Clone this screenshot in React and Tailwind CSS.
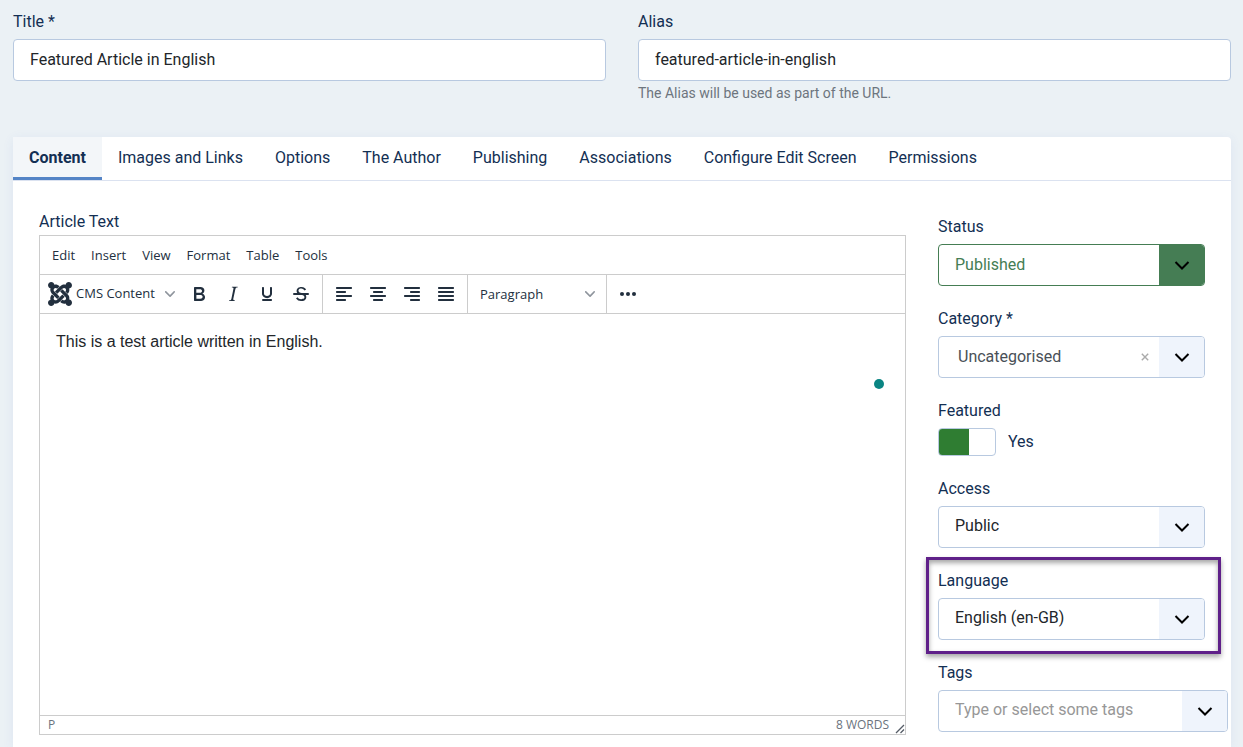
import React, { useState } from "react";
import clsx from "clsx";
import { SiJoomla } from "react-icons/si";

const TABS = [
  "Content",
  "Images and Links",
  "Options",
  "The Author",
  "Publishing",
  "Associations",
  "Configure Edit Screen",
  "Permissions",
];

const MENUS = ["Edit", "Insert", "View", "Format", "Table", "Tools"];

const SmallChevron = () => (
  <svg width="10" height="10" viewBox="0 0 10 10" className="fill-[#8f959d]">
    <path d="M8.7 2.2c.3-.3.8-.3 1 0 .4.4.4.9 0 1.2L5.7 7.8c-.3.3-.9.3-1.2 0L.2 3.4a.8.8 0 0 1 0-1.2c.3-.3.8-.3 1.1 0L5 6l3.7-3.8Z" />
  </svg>
);

const BigChevron = () => (
  <svg width="16" height="16" viewBox="0 0 16 16" fill="none" stroke="#000" strokeWidth="2">
    <path d="M1.5 5 8 11.5 14.5 5" />
  </svg>
);

const ToolButton = ({ label, children }) => (
  <button type="button" aria-label={label} className="flex h-[34px] w-[34px] items-center justify-center">
    <svg width="24" height="24" viewBox="0 0 24 24" className="fill-[#222f3e]">
      {children}
    </svg>
  </button>
);

// x and width of the four text lines in an alignment icon
const ALIGNMENTS = {
  "Align left": [[4, 16], [4, 10], [4, 16], [4, 10]],
  "Align center": [[4, 16], [7, 10], [4, 16], [7, 10]],
  "Align right": [[4, 16], [10, 10], [4, 16], [10, 10]],
  Justify: [[4, 16], [4, 16], [4, 16], [4, 16]],
};

const Field = ({ id, label, className, children }) => (
  <div className={clsx("relative flex flex-col gap-1", className)}>
    <label htmlFor={id} className="self-start leading-[26px]">
      {label}
    </label>
    {children}
  </div>
);

const SelectBox = ({ id, value, green, clearable }) => (
  <div
    className={clsx(
      "grid h-[42px] grid-cols-[1fr_28px_45px] overflow-hidden rounded border bg-white",
      green ? "border-[#457d54]" : "border-[#b8c9e0]"
    )}
  >
    <select
      id={id}
      className={clsx(
        "col-span-full row-start-1 appearance-none outline-none",
        green && "text-[#457d54]",
        clearable ? "pl-[19px] text-[#495057]" : "pl-4",
        !green && !clearable && "pb-0.5 text-[#22262a]"
      )}
    >
      <option>{value}</option>
    </select>
    {clearable && (
      <button
        type="button"
        aria-label={`Clear ${value}`}
        className="col-start-2 row-start-1 flex items-center justify-center"
      >
        <svg width="8" height="8" viewBox="0 0 8 8" stroke="#aaa" strokeWidth="1.4">
          <path d="m.8.8 6.4 6.4M7.2.8.8 7.2" />
        </svg>
      </button>
    )}
    <span
      className={clsx(
        "pointer-events-none col-start-3 row-start-1 flex items-center justify-center",
        green ? "bg-[#457d54]" : "bg-[#eff4fc]"
      )}
    >
      <BigChevron />
    </span>
  </div>
);

const Editor = () => {
  const [text, setText] = useState("This is a test article written in English.");
  const words = text.split(/\s+/).filter(Boolean).length;

  return (
    <div className="relative flex flex-1 flex-col border border-[#ccc] font-['Open_Sans',sans-serif] text-[13px] text-[#222f3e]">
      <div className="flex h-[39px] items-center gap-4 border-b border-[#ccc] px-3 pt-0.5">
        {MENUS.map((menu) => (
          <button type="button" key={menu}>
            {menu}
          </button>
        ))}
      </div>

      <div className="flex h-[39px] border-b border-[#ccc]">
        <div className="flex items-center border-r border-[#ccc] px-1">
          <button type="button" className="flex w-[138px] items-center pl-1">
            <SiJoomla size={24} />
            <span className="ml-1 flex-1 text-left">CMS Content</span>
            <span className="mr-[7px]">
              <SmallChevron />
            </span>
          </button>
          <ToolButton label="Bold">
            <path
              fillRule="evenodd"
              d="M7.8 19c-.3 0-.5 0-.6-.2l-.2-.5V5.7c0-.2 0-.4.2-.5l.6-.2h5c1.5 0 2.7.3 3.5 1 .7.6 1.1 1.4 1.1 2.5a3 3 0 0 1-.6 1.9c-.4.6-1 1-1.6 1.2.4.1.9.3 1.3.6s.8.7 1 1.2c.4.4.5 1 .5 1.6 0 1.3-.4 2.3-1.3 3-.8.7-2.1 1-3.8 1H7.8Zm5-8.3c.6 0 1.2-.1 1.6-.5.4-.3.6-.7.6-1.3 0-1.1-.8-1.7-2.3-1.7H9.3v3.5h3.4Zm.5 6c.7 0 1.3-.1 1.7-.4.4-.4.6-.9.6-1.5s-.2-1-.7-1.4c-.4-.3-1-.4-2-.4H9.4v3.8h4Z"
            />
          </ToolButton>
          <ToolButton label="Italic">
            <path d="m16.7 4.7-.1.9h-.3c-.6 0-1 0-1.4.3-.3.3-.4.6-.5 1.1l-2.1 9.8v.6c0 .5.4.8 1.4.8h.2l-.2.8H8l.2-.8h.2c1.1 0 1.8-.5 2-1.5l2-9.8.1-.5c0-.6-.4-.8-1.4-.8h-.3l.2-.9h5.8Z" />
          </ToolButton>
          <ToolButton label="Underline">
            <path d="M16 5c.6 0 1 .4 1 1v5.5a4 4 0 0 1-.4 1.8l-1 1.4a5.3 5.3 0 0 1-5.5 1 5 5 0 0 1-1.6-1c-.5-.4-.8-.9-1.1-1.4a4 4 0 0 1-.4-1.8V6c0-.6.4-1 1-1s1 .4 1 1v5.5c0 .3 0 .6.2 1l.6.7a3.3 3.3 0 0 0 2.2.8 3.4 3.4 0 0 0 2.2-.8c.3-.2.4-.5.6-.8l.2-.9V6c0-.6.4-1 1-1ZM8 17h8c.6 0 1 .4 1 1s-.4 1-1 1H8a1 1 0 0 1 0-2Z" />
          </ToolButton>
          <ToolButton label="Strikethrough">
            <path d="M15.6 8.5c-.5-.7-1-1.1-1.3-1.3-.6-.4-1.3-.6-2-.6-2.7 0-2.8 1.7-2.8 2.1 0 1.6 1.8 2 3.2 2.3 4.4.9 4.6 2.8 4.6 3.9 0 1.4-.7 4.1-5 4.1A6.2 6.2 0 0 1 7 16.4l1.5-1.1c.4.6 1.6 2 3.7 2 1.6 0 2.5-.4 3-1.2.4-.8.3-2-.8-2.6-.7-.4-1.6-.7-2.9-1-1-.2-3.9-.8-3.9-3.6C7.6 6 10.3 5 12.4 5c2.9 0 4.2 1.6 4.7 2.4l-1.5 1.1Z" />
            <path d="M5 11h14a1 1 0 0 1 0 2H5a1 1 0 0 1 0-2Z" />
          </ToolButton>
        </div>

        <div className="flex items-center border-r border-[#ccc] px-1">
          {Object.entries(ALIGNMENTS).map(([label, lines]) => (
            <ToolButton key={label} label={label}>
              {lines.map(([x, width], i) => (
                <rect key={i} x={x} y={5 + i * 4} width={width} height="2" rx="0.7" />
              ))}
            </ToolButton>
          ))}
        </div>

        <div className="grid grid-cols-[1fr_24px] items-center border-r border-[#ccc] px-1">
          <select
            aria-label="Block format"
            className="col-span-full row-start-1 w-[130px] appearance-none pt-0.5 pl-2 outline-none"
          >
            <option>Paragraph</option>
          </select>
          <span className="pointer-events-none col-start-2 row-start-1 flex justify-center">
            <SmallChevron />
          </span>
        </div>

        <div className="flex items-center px-1">
          <ToolButton label="More">
            <circle cx="6" cy="12" r="2" />
            <circle cx="12" cy="12" r="2" />
            <circle cx="18" cy="12" r="2" />
          </ToolButton>
        </div>
      </div>

      <textarea
        id="article-text"
        value={text}
        onChange={(e) => setText(e.target.value)}
        className="w-full flex-1 resize-none px-4 py-4 font-['Liberation_Sans',sans-serif] text-base text-[#22262a] outline-none"
      />
      <span className="absolute top-[143px] right-[21px] size-2.5 rounded-full bg-[#0a8583]" />

      <div className="flex h-[19px] items-center justify-between border-t border-[#ccc] pl-2 text-xs text-[#6b737d]">
        <span>P</span>
        <div className="flex h-full items-center gap-1.5">
          <span>{words} WORDS</span>
          <svg width="10" height="10" viewBox="0 0 10 10" className="self-end" fill="none" stroke="#555c66" strokeWidth="1.3">
            <path d="M1 9 9 1M5.5 9 9 5.5" />
          </svg>
        </div>
      </div>
    </div>
  );
};

const App = () => {
  const [activeTab, setActiveTab] = useState("Content");
  const [featured, setFeatured] = useState(true);

  const inputClass =
    "h-[42px] w-full rounded border border-[#b8c9e0] bg-white px-4 pb-0.5 text-[#22262a] outline-none";

  return (
    <div className="flex min-h-screen flex-col bg-[#ebf1f5] px-[13px] pt-[9px] pr-3 font-[Roboto,sans-serif] text-base text-[#132f53]">
      <div className="mb-[34px] grid grid-cols-2 gap-8">
        <Field id="title" label="Title *">
          <input id="title" type="text" defaultValue="Featured Article in English" className={inputClass} />
        </Field>
        <div>
          <Field id="alias" label="Alias">
            <input id="alias" type="text" defaultValue="featured-article-in-english" className={inputClass} />
          </Field>
          <p className="mt-0.5 text-sm text-[#6d757e]">The Alias will be used as part of the URL.</p>
        </div>
      </div>

      <main className="flex flex-1 flex-col rounded-t bg-white shadow-[0_2px_12px_rgba(60,90,200,0.08)]">
        <div role="tablist" className="flex h-11 border-b border-[#dbe2f0]">
          {TABS.map((tab) => (
            <button
              key={tab}
              type="button"
              role="tab"
              aria-selected={tab === activeTab}
              onClick={() => setActiveTab(tab)}
              className={clsx(
                "border-b-3 px-4 pt-0.5",
                tab === activeTab ? "border-[#5484c6] bg-[#f3f6f9] font-bold" : "border-transparent"
              )}
            >
              {tab}
            </button>
          ))}
        </div>

        <div className="grid flex-1 grid-cols-[1fr_290px] gap-8 pt-7 pr-[3px] pb-3 pl-[26px]">
          <div className="flex flex-col">
            <label htmlFor="article-text" className="self-start leading-[26px]">
              Article Text
            </label>
            <Editor />
          </div>

          <div className="mt-[5px] flex flex-col gap-5">
            <Field id="status" label="Status" className="mr-[23px]">
              <SelectBox id="status" value="Published" green />
            </Field>
            <Field id="category" label="Category *" className="mr-[23px]">
              <SelectBox id="category" value="Uncategorised" clearable />
            </Field>
            <Field id="featured" label="Featured" className="mr-[23px]">
              <div className="flex items-center gap-3">
                <input
                  id="featured"
                  type="checkbox"
                  role="switch"
                  checked={featured}
                  onChange={(e) => setFeatured(e.target.checked)}
                  className="h-7 w-[58px] appearance-none rounded border border-[#b8c9e0] bg-[linear-gradient(to_right,#fff_47%,#888_47%)] checked:bg-[linear-gradient(to_right,#2f7d32_53%,#fff_53%)]"
                />
                <span>{featured ? "Yes" : "No"}</span>
              </div>
            </Field>
            <Field id="access" label="Access" className="mr-[23px]">
              <SelectBox id="access" value="Public" />
            </Field>
            <Field id="language" label="Language" className="mr-[23px]">
              <SelectBox id="language" value="English (en-GB)" />
              <div className="pointer-events-none absolute -top-[11px] -right-4 -bottom-3.5 -left-3 border-3 border-[#5f2089] shadow-[0_3px_5px_rgba(0,0,0,0.35),inset_0_3px_5px_rgba(0,0,0,0.35)]" />
            </Field>
            <Field id="tags" label="Tags">
              <div className="flex h-[42px] overflow-hidden rounded border border-[#b8c9e0]">
                <input
                  id="tags"
                  type="text"
                  placeholder="Type or select some tags"
                  className="min-w-0 flex-1 pb-0.5 pl-4 outline-none placeholder:text-[#979797]"
                />
                <button
                  type="button"
                  aria-label="Show tags"
                  className="flex w-[45px] items-center justify-center bg-[#eff4fc]"
                >
                  <BigChevron />
                </button>
              </div>
            </Field>
          </div>
        </div>
      </main>
    </div>
  );
};

export default App;
